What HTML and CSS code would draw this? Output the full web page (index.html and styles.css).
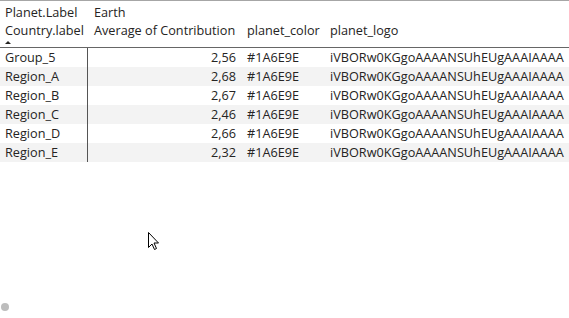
FILE: index.html
```html
<!DOCTYPE html>
<html>
<head>
<meta charset="utf-8">
<link rel="stylesheet" href="styles.css">
</head>
<body>
<div class="visual">
  <div class="grid">
    <div class="hcell c1 r1">Planet.Label</div>
    <div class="hcell c2 r1 span">Earth</div>
    <div class="hcell c1 r2">Country.label<span class="sort"></span></div>
    <div class="hcell c2 r2">Average of Contribution</div>
    <div class="hcell c3 r2">planet_color</div>
    <div class="hcell c4 r2">planet_logo</div>

    <div class="cell c1">Group_5</div><div class="cell c2 num">2,56</div><div class="cell c3">#1A6E9E</div><div class="cell c4">iVBORw0KGgoAAAANSUhEUgAAAIAAAA</div>
    <div class="cell c1 alt">Region_A</div><div class="cell c2 num alt">2,68</div><div class="cell c3 alt">#1A6E9E</div><div class="cell c4 alt">iVBORw0KGgoAAAANSUhEUgAAAIAAAA</div>
    <div class="cell c1">Region_B</div><div class="cell c2 num">2,67</div><div class="cell c3">#1A6E9E</div><div class="cell c4">iVBORw0KGgoAAAANSUhEUgAAAIAAAA</div>
    <div class="cell c1 alt">Region_C</div><div class="cell c2 num alt">2,46</div><div class="cell c3 alt">#1A6E9E</div><div class="cell c4 alt">iVBORw0KGgoAAAANSUhEUgAAAIAAAA</div>
    <div class="cell c1">Region_D</div><div class="cell c2 num">2,66</div><div class="cell c3">#1A6E9E</div><div class="cell c4">iVBORw0KGgoAAAANSUhEUgAAAIAAAA</div>
    <div class="cell c1 alt">Region_E</div><div class="cell c2 num alt">2,32</div><div class="cell c3 alt">#1A6E9E</div><div class="cell c4 alt">iVBORw0KGgoAAAANSUhEUgAAAIAAAA</div>
  </div>
  <span class="dot"></span>
  <svg class="cursor" width="12" height="19" viewBox="0 0 12 19"><path d="M0.5 0.5 L0.5 15.5 L4 12 L6.5 17.5 L8.5 16.5 L6 11 L10.5 11 Z" fill="#fff" stroke="#000" stroke-width="1" stroke-linejoin="miter"/></svg>
</div>
</body>
</html>
```
FILE: styles.css
```css
html, body {
  margin: 0;
  padding: 0;
  background: #fff;
}
.visual {
  position: relative;
  width: 569px;
  height: 318px;
  overflow: hidden;
  border-top: 1px solid #a6a6a6;
  box-sizing: border-box;
  font-family: "Open Sans", "Noto Sans", sans-serif;
  font-size: 12.7px;
  color: #252423;
}
.grid {
  display: grid;
  grid-template-columns: 88px 153px 83px 300px;
  white-space: nowrap;
}
.hcell {
  overflow: hidden;
  line-height: 19px;
}
.r1 { padding-top: 2px; height: 18px; }
.r2 { height: 26px; border-bottom: 1px solid #666; position: relative; }
.r1.span { grid-column: 2 / 5; }
.c1 { padding-left: 5px; }
.c2 { padding-left: 6px; }
.c3 { padding-left: 6px; }
.c4 { padding-left: 6px; overflow: hidden; }
.cell {
  height: 19px;
  line-height: 19px;
  overflow: hidden;
}
.cell.c1 { border-right: 1px solid #555; box-sizing: border-box; }
.num { text-align: right; padding-right: 5px; }
.alt { background: #f3f3f3; }
.sort {
  position: absolute;
  left: 5px;
  top: 20px;
  width: 0;
  height: 0;
  border-left: 3px solid transparent;
  border-right: 3px solid transparent;
  border-bottom: 3px solid #252423;
}
.dot {
  position: absolute;
  left: 1px;
  top: 302px;
  width: 8px;
  height: 8px;
  border-radius: 50%;
  background: #bdbdbd;
}
.cursor {
  position: absolute;
  left: 148px;
  top: 231px;
}
```
